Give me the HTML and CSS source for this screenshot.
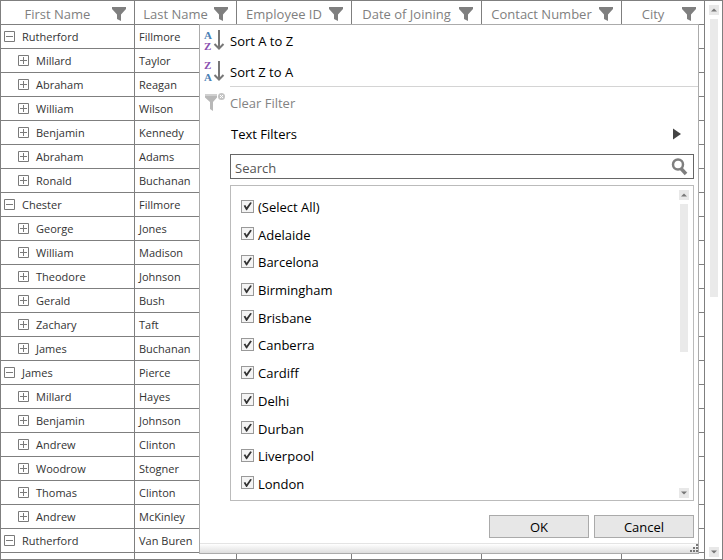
FILE: index.html
```html
<!DOCTYPE html>
<html lang="en">
<head>
<meta charset="utf-8">
<title>Employees</title>
<link rel="stylesheet" href="styles.css">
</head>
<body>
<svg class="sprite" aria-hidden="true">
  <symbol id="funnel" viewBox="0 0 14 14"><path d="M0 0h14v2L9 7.5V14L5 12V7.5L0 2z" fill="#7f7f7f"/></symbol>
  <symbol id="plus" viewBox="0 0 11 11"><path d="M.5 .5h10v10H.5zM2 5.5h7M5.5 2v7" fill="none" stroke="#7a7a7a"/></symbol>
  <symbol id="minus" viewBox="0 0 11 11"><path d="M.5 .5h10v10H.5zM2 5.5h7" fill="none" stroke="#7a7a7a"/></symbol>
  <symbol id="up" viewBox="0 0 10 10"><path d="M2 6.500L5 3.500l3 3z" fill="#777"/></symbol>
  <symbol id="down" viewBox="0 0 10 10"><path d="M2 3.500h6l-3 3z" fill="#777"/></symbol>
</svg>
<main class="grid">
  <div class="grid-view">
    <table class="records">
      <colgroup><col class="c-first"><col class="c-last"><col class="c-id"><col class="c-date"><col class="c-contact"><col></colgroup>
      <thead>
        <tr>
          <th><div class="head"><span>First Name</span><button aria-label="Filter First Name"><svg><use href="#funnel"/></svg></button></div></th>
          <th><div class="head"><span>Last Name</span><button aria-label="Filter Last Name"><svg><use href="#funnel"/></svg></button></div></th>
          <th><div class="head"><span>Employee ID</span><button aria-label="Filter Employee ID"><svg><use href="#funnel"/></svg></button></div></th>
          <th><div class="head"><span>Date of Joining</span><button aria-label="Filter Date of Joining"><svg><use href="#funnel"/></svg></button></div></th>
          <th><div class="head"><span>Contact Number</span><button aria-label="Filter Contact Number"><svg><use href="#funnel"/></svg></button></div></th>
          <th><div class="head"><span>City</span><button aria-label="Filter City"><svg><use href="#funnel"/></svg></button></div></th>
        </tr>
      </thead>
      <tbody>
        <tr><td><div class="node"><button aria-label="Collapse"><svg><use href="#minus"/></svg></button>Rutherford</div></td><td>Fillmore</td><td></td><td></td><td></td><td></td></tr>
        <tr><td><div class="node child"><button aria-label="Expand"><svg><use href="#plus"/></svg></button>Millard</div></td><td>Taylor</td><td></td><td></td><td></td><td></td></tr>
        <tr><td><div class="node child"><button aria-label="Expand"><svg><use href="#plus"/></svg></button>Abraham</div></td><td>Reagan</td><td></td><td></td><td></td><td></td></tr>
        <tr><td><div class="node child"><button aria-label="Expand"><svg><use href="#plus"/></svg></button>William</div></td><td>Wilson</td><td></td><td></td><td></td><td></td></tr>
        <tr><td><div class="node child"><button aria-label="Expand"><svg><use href="#plus"/></svg></button>Benjamin</div></td><td>Kennedy</td><td></td><td></td><td></td><td></td></tr>
        <tr><td><div class="node child"><button aria-label="Expand"><svg><use href="#plus"/></svg></button>Abraham</div></td><td>Adams</td><td></td><td></td><td></td><td></td></tr>
        <tr><td><div class="node child"><button aria-label="Expand"><svg><use href="#plus"/></svg></button>Ronald</div></td><td>Buchanan</td><td></td><td></td><td></td><td></td></tr>
        <tr><td><div class="node"><button aria-label="Collapse"><svg><use href="#minus"/></svg></button>Chester</div></td><td>Fillmore</td><td></td><td></td><td></td><td></td></tr>
        <tr><td><div class="node child"><button aria-label="Expand"><svg><use href="#plus"/></svg></button>George</div></td><td>Jones</td><td></td><td></td><td></td><td></td></tr>
        <tr><td><div class="node child"><button aria-label="Expand"><svg><use href="#plus"/></svg></button>William</div></td><td>Madison</td><td></td><td></td><td></td><td></td></tr>
        <tr><td><div class="node child"><button aria-label="Expand"><svg><use href="#plus"/></svg></button>Theodore</div></td><td>Johnson</td><td></td><td></td><td></td><td></td></tr>
        <tr><td><div class="node child"><button aria-label="Expand"><svg><use href="#plus"/></svg></button>Gerald</div></td><td>Bush</td><td></td><td></td><td></td><td></td></tr>
        <tr><td><div class="node child"><button aria-label="Expand"><svg><use href="#plus"/></svg></button>Zachary</div></td><td>Taft</td><td></td><td></td><td></td><td></td></tr>
        <tr><td><div class="node child"><button aria-label="Expand"><svg><use href="#plus"/></svg></button>James</div></td><td>Buchanan</td><td></td><td></td><td></td><td></td></tr>
        <tr><td><div class="node"><button aria-label="Collapse"><svg><use href="#minus"/></svg></button>James</div></td><td>Pierce</td><td></td><td></td><td></td><td></td></tr>
        <tr><td><div class="node child"><button aria-label="Expand"><svg><use href="#plus"/></svg></button>Millard</div></td><td>Hayes</td><td></td><td></td><td></td><td></td></tr>
        <tr><td><div class="node child"><button aria-label="Expand"><svg><use href="#plus"/></svg></button>Benjamin</div></td><td>Johnson</td><td></td><td></td><td></td><td></td></tr>
        <tr><td><div class="node child"><button aria-label="Expand"><svg><use href="#plus"/></svg></button>Andrew</div></td><td>Clinton</td><td></td><td></td><td></td><td></td></tr>
        <tr><td><div class="node child"><button aria-label="Expand"><svg><use href="#plus"/></svg></button>Woodrow</div></td><td>Stogner</td><td></td><td></td><td></td><td></td></tr>
        <tr><td><div class="node child"><button aria-label="Expand"><svg><use href="#plus"/></svg></button>Thomas</div></td><td>Clinton</td><td></td><td></td><td></td><td></td></tr>
        <tr><td><div class="node child"><button aria-label="Expand"><svg><use href="#plus"/></svg></button>Andrew</div></td><td>McKinley</td><td></td><td></td><td></td><td></td></tr>
        <tr><td><div class="node"><button aria-label="Collapse"><svg><use href="#minus"/></svg></button>Rutherford</div></td><td>Van Buren</td><td></td><td></td><td></td><td></td></tr>
        <tr><td></td><td></td><td></td><td></td><td></td><td></td></tr>
      </tbody>
    </table>
  </div>
  <div class="scroll">
    <button aria-label="Scroll up"><svg><use href="#up"/></svg></button>
    <div class="track"><div class="thumb"></div></div>
    <button aria-label="Scroll down"><svg><use href="#down"/></svg></button>
  </div>

  <section class="popup" aria-label="Column filter">
    <button class="command">
      <svg viewBox="0 0 30 31"><text class="glyph blue" x="4" y="14">A</text><text class="glyph violet" x="4" y="25">Z</text><path d="M19 5v18M14.500 19L19 23.500l4.500-4.500" fill="none" stroke="#777" stroke-width="2"/></svg>
      <span>Sort A to Z</span>
    </button>
    <button class="command">
      <svg viewBox="0 0 30 31"><text class="glyph violet" x="4" y="13">Z</text><text class="glyph blue" x="4" y="25">A</text><path d="M19 5v18M14.500 19L19 23.500l4.500-4.500" fill="none" stroke="#777" stroke-width="2"/></svg>
      <span>Sort Z to A</span>
    </button>
    <hr>
    <button class="command" disabled>
      <svg viewBox="0 0 30 31"><path d="M5 7h12v3H5z" fill="#d0d0d0"/><path d="M5 9h12v1.500l-4 4.500v9l-3-2v-7l-5-4.500z" fill="#b8b8b8"/><circle cx="21.500" cy="9.500" r="3.500" fill="#c4c4c4"/><path d="M20 8l3 3m0-3l-3 3" stroke="#fff"/></svg>
      <span>Clear Filter</span>
    </button>
    <button class="command submenu">
      <span>Text Filters</span>
      <svg class="caret" viewBox="0 0 8 12"><path d="M0 .500L8 6l-8 5.500z" fill="#444"/></svg>
    </button>
    <div class="search">
      <input type="text" placeholder="Search" aria-label="Search">
      <svg viewBox="0 0 18 18"><circle cx="7" cy="6.500" r="5" fill="none" stroke="#7f7f7f" stroke-width="2.500"/><path d="M10 10.500l5 5.500" stroke="#7f7f7f" stroke-width="3.500"/></svg>
    </div>
    <div class="list">
      <div class="options">
        <label><input type="checkbox" checked>(Select All)</label>
        <label><input type="checkbox" checked>Adelaide</label>
        <label><input type="checkbox" checked>Barcelona</label>
        <label><input type="checkbox" checked>Birmingham</label>
        <label><input type="checkbox" checked>Brisbane</label>
        <label><input type="checkbox" checked>Canberra</label>
        <label><input type="checkbox" checked>Cardiff</label>
        <label><input type="checkbox" checked>Delhi</label>
        <label><input type="checkbox" checked>Durban</label>
        <label><input type="checkbox" checked>Liverpool</label>
        <label><input type="checkbox" checked>London</label>
      </div>
      <div class="scroll">
        <button aria-label="Scroll list up"><svg><use href="#up"/></svg></button>
        <div class="track"><div class="thumb"></div></div>
        <button aria-label="Scroll list down"><svg><use href="#down"/></svg></button>
      </div>
    </div>
    <div class="actions"><button>OK</button><button>Cancel</button></div>
    <div class="grip"><svg viewBox="0 0 8 8"><path d="M6 0h2v2H6zM3 3h2v2H3zM6 3h2v2H6zM0 6h2v2H0zM3 6h2v2H3zM6 6h2v2H6z" fill="#777"/></svg></div>
  </section>
</main>
</body>
</html>
```
FILE: styles.css
```css
* { box-sizing: border-box; }

body {
  margin: 0;
  font: 13px/20px "Open Sans", sans-serif;
  color: #000;
  background: #fff;
}

button {
  margin: 0;
  padding: 0;
  border: 0;
  background: none;
  font: inherit;
  color: inherit;
}

svg { display: block; }
.sprite { position: absolute; width: 0; height: 0; }

.grid {
  position: relative;
  display: flex;
  height: 100vh;
  border: 1px solid #7f7f7f;
  overflow: hidden;
}

.grid-view { flex: 1; overflow: hidden; }

.records {
  width: 100%;
  table-layout: fixed;
  border-collapse: separate;
  border-spacing: 0;
}

.c-first { width: 134px; }
.c-last { width: 102px; }
.c-id { width: 115px; }
.c-date { width: 130px; }
.c-contact { width: 140px; }

th, td {
  height: 24px;
  padding: 0;
  border-right: 1px solid #7f7f7f;
  border-bottom: 1px solid #7f7f7f;
}

th { font-weight: 400; color: #7f7f7f; }

td {
  padding-left: 4px;
  font-size: 11px;
  color: #333;
  text-align: left;
}

td:first-child { padding-left: 3px; }

.head {
  display: flex;
  align-items: center;
  padding: 2px 8px 0 2px;
  white-space: nowrap;
}

.head span { flex: 1; text-align: center; }
.head svg { width: 14px; height: 14px; }

.node { display: flex; align-items: center; gap: 7px; }
.node.child { padding-left: 14px; }
.node svg { width: 11px; height: 11px; }

.scroll {
  display: flex;
  flex-direction: column;
  align-items: center;
  gap: 4px;
  width: 17px;
  padding: 4px 3px 2px;
}

.scroll button { background: #e8e8e8; }
.scroll button svg { width: 10px; height: 10px; }
.track { flex: 1; width: 8px; }
.thumb { height: 53%; background: #eaeaea; }

.popup {
  position: absolute;
  top: 23px;
  right: 23px;
  bottom: 5px;
  left: 198px;
  display: flex;
  flex-direction: column;
  border: 1px solid #ababab;
  background: #fff;
}

.command {
  display: flex;
  align-items: center;
  height: 31px;
  text-align: left;
}

.command svg { width: 30px; height: 31px; }
.command:disabled { color: #838383; }
.command.submenu { justify-content: space-between; padding: 0 17px 0 31px; }
.command .caret { width: 8px; height: 12px; }

.glyph { font: bold 11px "Liberation Serif", serif; }
.blue { fill: #4a7fb5; }
.violet { fill: #8a4fb0; }

hr {
  width: calc(100% - 30px);
  height: 1px;
  margin: -1px 0 0 30px;
  border: 0;
  background: #d4d4d4;
}

.search {
  display: flex;
  align-items: center;
  height: 25px;
  margin: 5px 4px 0 30px;
  padding-right: 4px;
  border: 1px solid #666;
}

.search input {
  flex: 1;
  min-width: 0;
  height: 23px;
  padding: 3px 4px 0;
  border: 0;
  outline: 0;
  background: none;
  font: inherit;
}

.search input::placeholder { color: #555; opacity: 1; }
.search svg { width: 18px; height: 18px; }

.list {
  flex: 1;
  display: flex;
  justify-content: space-between;
  margin: 6px 4px 0 30px;
  border: 1px solid #bbb;
}

.options {
  display: flex;
  flex-direction: column;
  justify-content: space-between;
  padding: 11px 0 6px 10px;
}

.options label { display: flex; align-items: center; gap: 4px; }

.options input {
  appearance: none;
  width: 13px;
  height: 13px;
  margin: 0 0 2px;
  border: 1px solid #999;
  background: #f4f4f4;
}

.options input:checked::before {
  content: "";
  display: block;
  height: 11px;
  background: #333;
  clip-path: polygon(15% 48%, 30% 42%, 42% 62%, 75% 15%, 90% 20%, 45% 88%, 38% 88%);
}

.list .scroll { padding: 4px 4px 2px 3px; }

.actions {
  display: flex;
  justify-content: flex-end;
  gap: 5px;
  margin: 14px 4px 5px 0;
}

.actions button {
  width: 100px;
  height: 23px;
  border: 1px solid #aaa;
  background: #e7e7e7;
}

.grip {
  display: flex;
  align-items: flex-end;
  justify-content: flex-end;
  height: 10px;
  padding-bottom: 1px;
  background: linear-gradient(#fff, #dedede);
  border-top: 1px solid #e4e4e4;
}

.grip svg { width: 8px; height: 8px; }
```
